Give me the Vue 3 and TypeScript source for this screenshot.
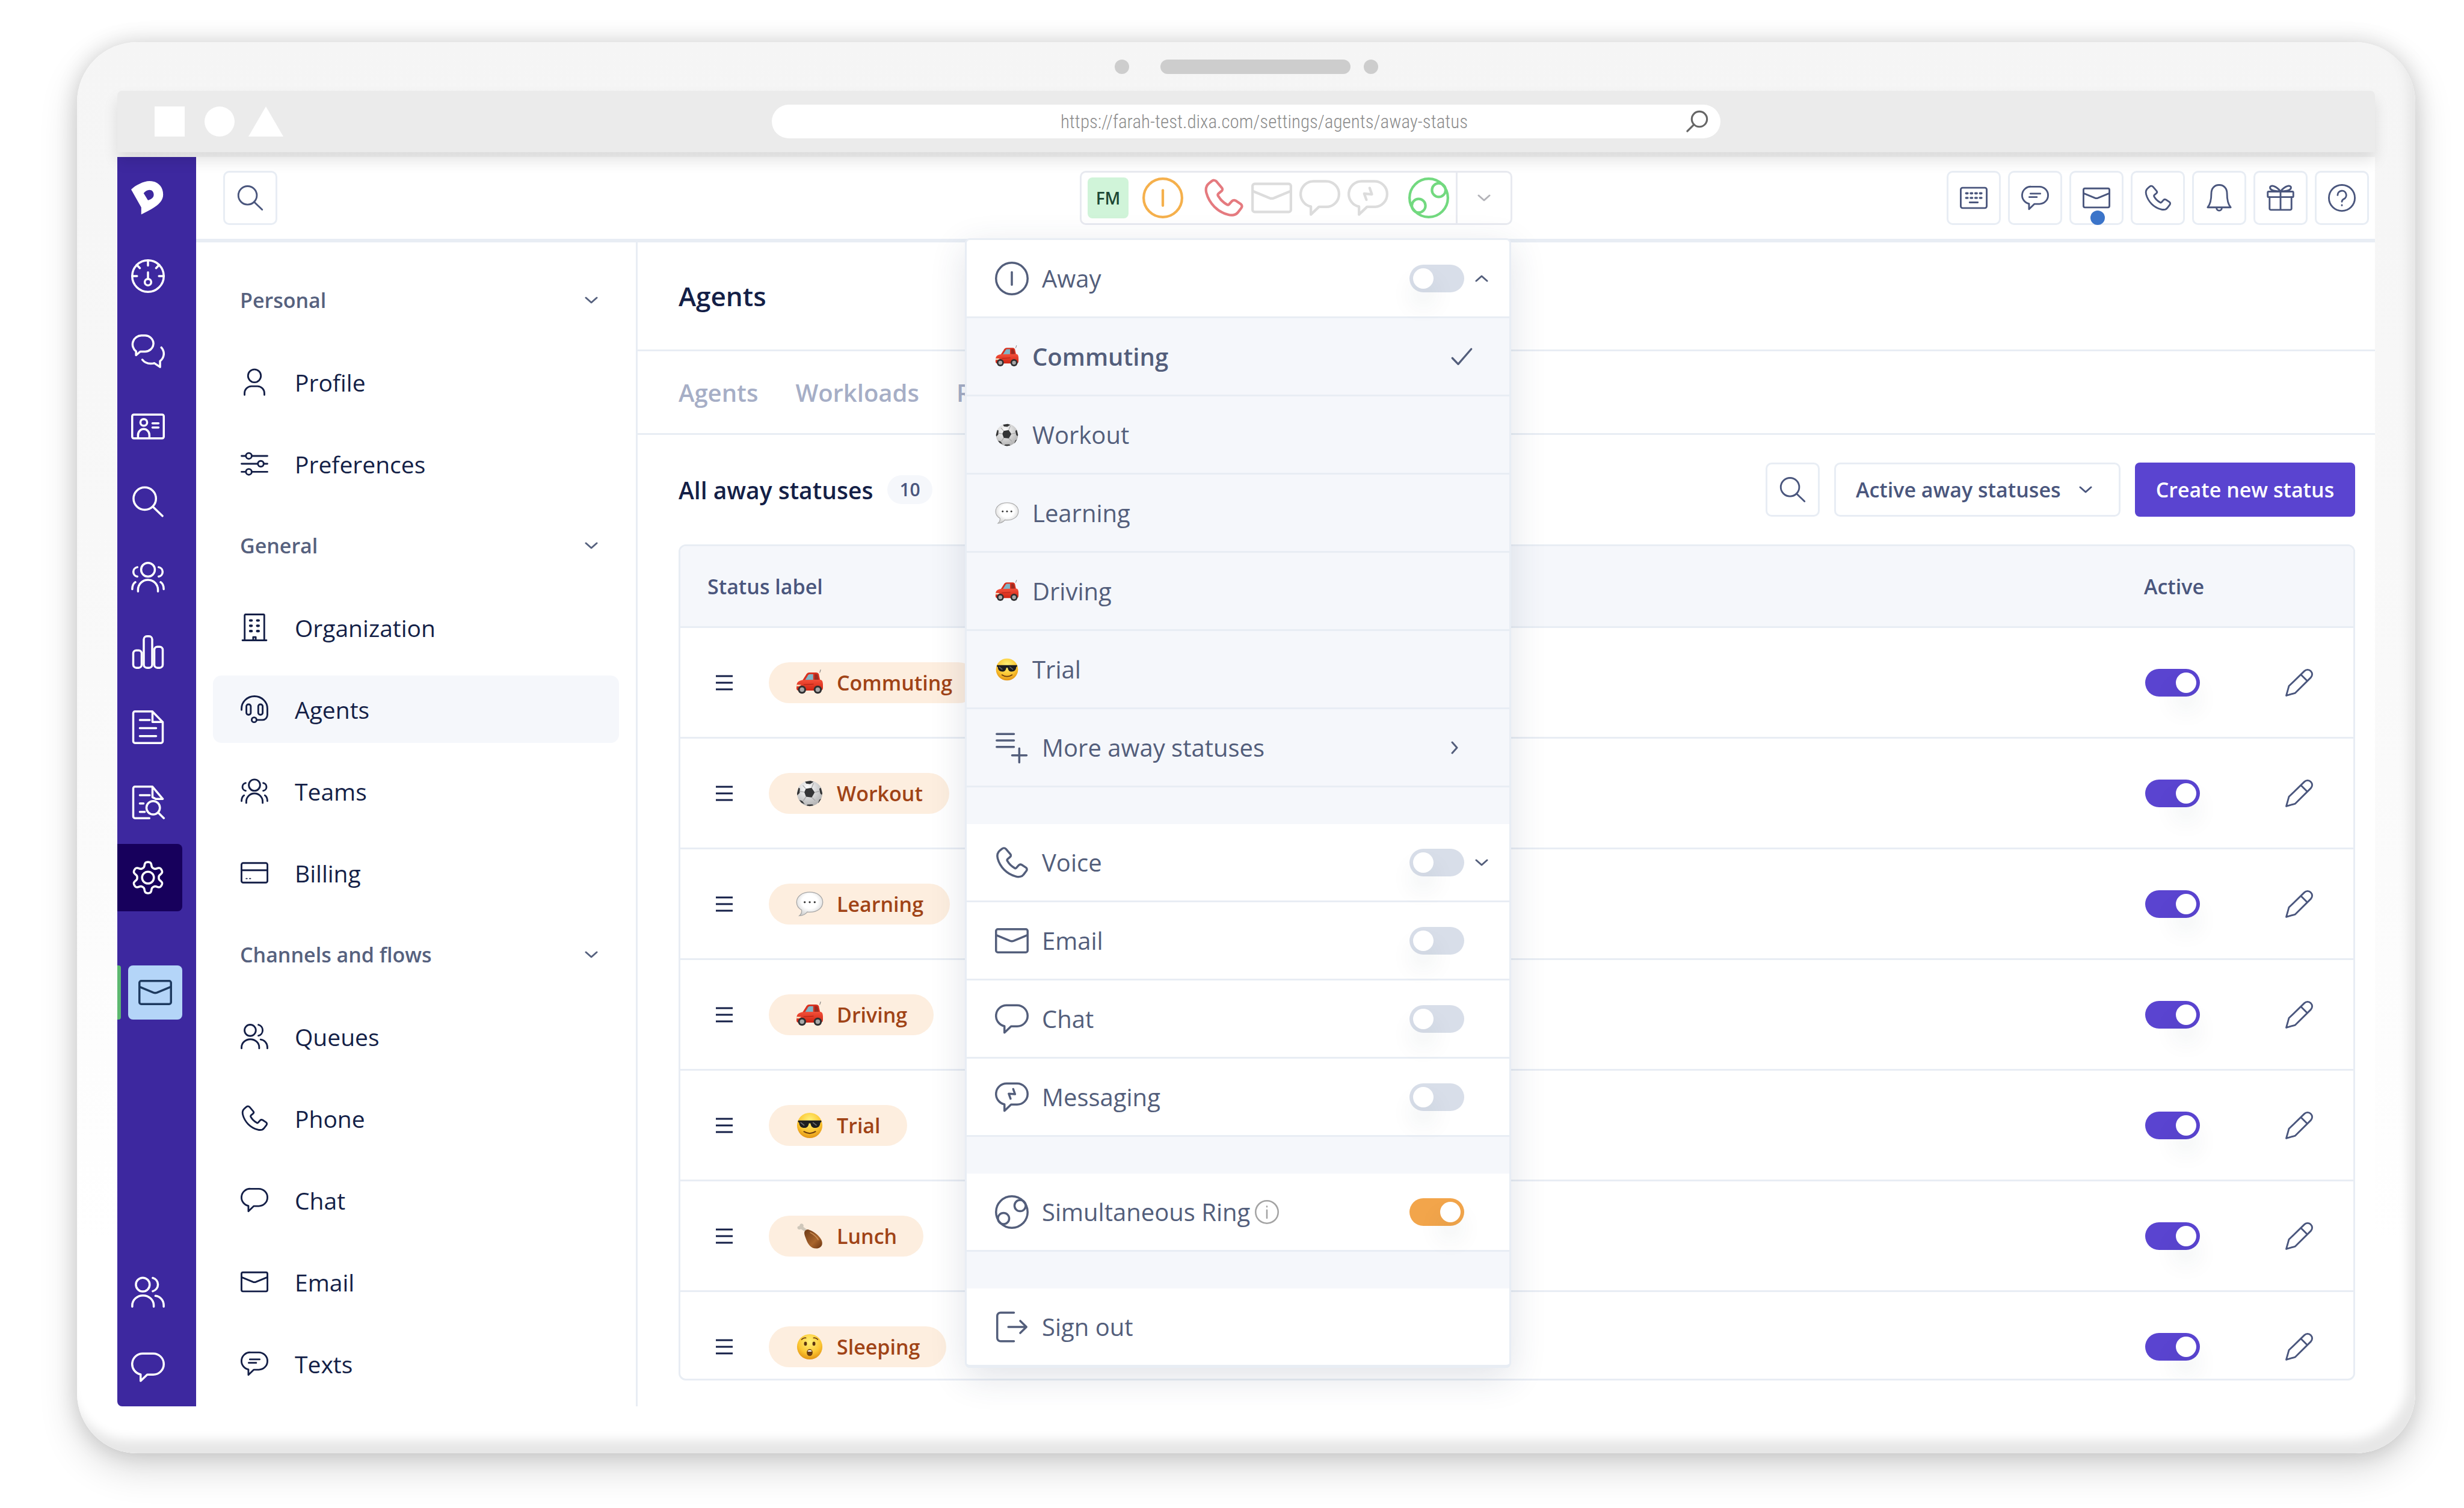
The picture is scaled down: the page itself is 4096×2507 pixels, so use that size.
<script setup lang="ts">
import { ref } from 'vue'

interface NavItem { label: string; icon: string; active?: boolean }
interface NavGroup { title: string; items: NavItem[] }
interface Status { label: string; emoji: string; active: boolean }
interface Channel { label: string; icon: string; on: boolean; expandable?: boolean }

/* Six-lobed outline of the settings cog, sampled around the centre. */
function cogOutline(): string {
  const points: string[] = []
  for (let i = 0; i < 120; i++) {
    const angle = (i / 120) * Math.PI * 2
    const radius = 9.4 + 1.8 * Math.tanh(1.8 * Math.cos(6 * angle))
    points.push(`${(12 + radius * Math.sin(angle)).toFixed(2)} ${(12 - radius * Math.cos(angle)).toFixed(2)}`)
  }
  return `M${points.join('L')}z`
}

const bubble = '<path d="M15.750 2.250h-7.500a7.500 7.500 0 0 0-1.500 14.850v4.650l4.700-4.500h4.300a7.500 7.500 0 0 0 0-15z"/>'

const icons: Record<string, string> = {
  search: '<circle cx="9.700" cy="9.800" r="8"/><path d="M15.400 15.500l6.900 6.700"/>',
  urlSearch: '<circle cx="14.500" cy="9.500" r="8"/><path d="M8.800 15.200l-7 7"/>',
  gauge: '<circle cx="12" cy="12" r="11.250"/><circle cx="12" cy="16.300" r="2.300"/><path d="M12 14V9.300M12 .8v3.700M4 4l2.200 2.300M20 4l-2.200 2.300M.8 12h3.400M23.200 12h-3.400"/>',
  chats: '<path d="M9.500.8H7.300a6.300 6.300 0 0 0-3.800 11.300v2.700l3-2.600h3a6 6 0 0 0 6.400-5.800A6 6 0 0 0 9.500.8z"/><path d="M21.500 9.300c2.700 3.100 2.200 7.300-.9 9.700v4.200l-4-2.700c-3.600.7-6.800-.1-8.600-2.500"/>',
  idCard: '<rect x=".75" y="3.500" width="22.500" height="17" rx="1.200"/><circle cx="9" cy="9.100" r="2.400"/><path d="M4.900 20.300v-2.200a4 4.200 0 0 1 8.100 0v2.200M15.200 9.800h4.300M15.200 12.700h4.300"/>',
  team: '<circle cx="12" cy="6.900" r="4.900"/><path d="M4.900 22.400v-1.200a7.100 7.100 0 0 1 14.200 0v1.200M4.400 5.100a3.400 3.400 0 0 0 0 6.700M19.600 5.100a3.400 3.400 0 0 1 0 6.700M3 15.800C1.500 16.700.8 18.500.8 20.800M21 15.800c1.500.9 2.200 2.700 2.200 5"/>',
  bars: '<rect x="1.500" y="10.800" width="6" height="12.400" rx="2.200"/><rect x="9" y=".8" width="6" height="22.400" rx="2.200"/><rect x="16.500" y="8.200" width="6" height="15" rx="2.200"/>',
  doc: '<path d="M2.700.8h12.500l7.300 7.500v13.700a1.200 1.200 0 0 1-1.200 1.200H2.700a1.200 1.200 0 0 1-1.200-1.200V2A1.200 1.200 0 0 1 2.700.8zM15.200.8v7.500h7.300M6.200 6.900h7M6.200 12.600h11.600M6.200 18.300h11.600"/>',
  docSearch: '<path d="M13 23.200H2.700A1.200 1.200 0 0 1 1.500 22V2A1.200 1.200 0 0 1 2.700.8h12.500l7.300 8.700h-5l-2.300-1.200V.8M6.200 6.900h7M6.200 12.800h2.600M6.200 18.700h3.500M19.300 19.300l4 3.900"/><circle cx="15.700" cy="15.800" r="4.800"/>',
  cog: `<path d="${cogOutline()}"/><circle cx="12" cy="12" r="4.200"/>`,
  mail: '<rect x=".75" y="3.750" width="22.500" height="16.500" rx="1.300"/><path d="M.9 8l9.800 4.100q1.300.5 2.600 0L23.100 8"/>',
  people: '<circle cx="8.300" cy="6.700" r="4.900"/><path d="M.8 22.400v-.9a7.500 6.900 0 0 1 15.300 0v.9M15.400 1.900a4.900 4.900 0 0 1 0 9.500M17.300 14.700a6.400 6.800 0 0 1 5.900 6.800v.9"/>',
  chat: bubble,
  text: `${bubble}<path d="M8 8.300h8.500M7 11.300h6.500"/>`,
  message: `${bubble}<path d="M13 6.200l1.300 3.700-4.500-.4 1.300 3.600"/>`,
  profile: '<circle cx="12" cy="6.700" r="5.600"/><path d="M3.400 23.200v-1.500a6 6 0 0 1 6-6h5.200a6 6 0 0 1 6 6v1.500"/>',
  sliders: '<path d="M.8 5.200h3.700M9.700 5.200h13.500M.8 12h14M20.200 12h3M.8 19h3.700M9.700 19h13.500"/><circle cx="7.100" cy="5.200" r="2.500"/><circle cx="17.500" cy="12" r="2.500"/><circle cx="7.100" cy="19" r="2.500"/>',
  building: '<path d="M3.500 23.200V1.500a.7.700 0 0 1 .7-.7h15.600a.7.700 0 0 1 .7.7v21.700M1.600 23.200h20.800M10.900 23v-2.600h2.200V23"/><path stroke-width="2.200" d="M8.300 6h1.200M14.400 6h1.200M8.300 10.600h1.200M14.400 10.600h1.200M8.300 15.200h1.200M14.400 15.200h1.200"/>',
  headset: '<path d="M.8 12.700v-1.200a11.200 10.700 0 0 1 22.400 0v5.500a4.300 4.300 0 0 1-4.300 4.300H14"/><rect x="5" y="7.800" width="3.800" height="9" rx="1.700"/><rect x="15.300" y="7.800" width="3.800" height="9" rx="1.700"/><circle cx="11.700" cy="21.200" r="2.100"/>',
  card: '<rect x=".75" y="3.500" width="22.500" height="17" rx="1.500"/><path d="M.8 9.800h22.400"/><path stroke-width="1" d="M4.800 17h.8M7.800 17h.8"/>',
  phone: '<path d="M5 2.200a2 2 0 0 1 2.800.1L11 6.100a1.300 1.300 0 0 1-.1 1.800l-2 1.700a1 1 0 0 0-.1 1.200c1.200 2.100 3 3.900 5.200 5.100.4.3.9.2 1.200-.1l1.700-1.900a1.900 1.900 0 0 1 2.200-.3l3 2a1.600 1.600 0 0 1 .3 2.300l-2 2.600c-1.200 1.600-3.600 2-5.800 1.300C8.500 20.200 3.600 15.300 1.900 9 1.300 6.600 2 4.600 3.500 3.400z"/>',
  keyboard: '<rect x=".75" y="3.200" width="22.500" height="17.600" rx="1.600"/><path stroke-width="1.900" d="M5.400 8h1.300M9.400 8h1.300M13.400 8h1.300M17.400 8h1.300M5.400 12h1.300M9.400 12h1.300M13.400 12h1.300M17.400 12h1.300"/><path d="M8.500 15.900h7"/>',
  bell: '<path d="M12 .8c4.200 0 6.800 3 6.800 7.200 0 5.500.7 9.500 3.200 12.200H2c2.500-2.700 3.200-6.700 3.200-12.200C5.200 3.800 7.800.8 12 .8zM9.700 20.600a2.300 2.400 0 0 0 4.600 0"/>',
  gift: '<rect x=".9" y="6.500" width="22.200" height="4.800" rx=".8"/><path d="M2.500 11.300v9.900a1.200 1.200 0 0 0 1.200 1.200h16.600a1.200 1.200 0 0 0 1.200-1.200v-9.900M12 6.500v15.900M12 6.300C9 6.300 4 6.200 3 3.700 2.500 2 4.300 1.200 6 1.800c2.500.8 4.500 2.700 6 4.500 1.500-1.800 3.500-3.700 6-4.500 1.700-.6 3.500.2 3 1.900-1 2.500-6 2.600-9 2.600z"/>',
  help: '<circle cx="12" cy="12" r="11.250"/><path d="M8.300 9.600a3.750 3.750 0 1 1 5.300 3.400c-1 .5-1.600 1.300-1.600 2.300M12 18.200v.3"/>',
  power: '<circle cx="12" cy="12" r="11.250"/><path d="M12 7.500v9"/>',
  ring: '<circle cx="12" cy="12" r="11.250"/><circle cx="17.900" cy="7.400" r="4"/><circle cx="6.100" cy="16.600" r="4"/>',
  info: '<circle cx="12" cy="12" r="11.250"/><path d="M12 10v8M12 6.300v.5"/>',
  listPlus: '<path d="M1.200 2.300h12.300M1.200 6.900h12.300M1.200 11.500h12.300M17.300 12.500v10M12.200 17.500h10.300"/>',
  signOut: '<path d="M13.500 1.800H4A2.400 2.400 0 0 0 1.600 4.200v15.600A2.400 2.400 0 0 0 4 22.200h9.500M9.500 12h12.700M18 7.700l4.400 4.300-4.400 4.300"/>',
  pencil: '<path d="M.8 23.200l2.300-8.300L16.500 1.900a3.900 3.900 0 0 1 5.600 5.600L8.600 20.900zM13.500 4.900l5.500 5.500"/>',
  check: '<path d="M1.500 13.500l6.500 6.700L22.500 3.500"/>',
}

const emojis: Record<string, string> = {
  car: '<path d="M8.500 15L14 6.500q1.300-1.800 3.500-1.800h9q2.500 0 3.300 2l1.700 7.800z" fill="#d9301e"/><path d="M12 14.500L16 8q.8-1.200 2.200-1.200h4.300v7.700z" fill="#7fb4c6"/><path d="M24.300 6.800h2.400q1.200 0 1.600 1.200l1.600 6.500h-5.600z" fill="#9b2c22"/><path d="M31 5l1.300-4" stroke="#777" stroke-width=".8"/><path d="M1 22c0-4.800 3-7 8.500-7.500L32 14q3 .5 3.200 5.500v5q0 3.500-3 3.700H3.500Q.8 28 .8 25z" fill="url(#carPaint)"/><path d="M1 20.500l6 .3q-1 1.900-3.200 1.900H1z" fill="#f7e7c8"/><path d="M10 20.500l13-.8" stroke="#a91f13" stroke-width=".8"/><circle cx="8" cy="27" r="5.300" fill="#2f2f31"/><circle cx="8" cy="27" r="2.900" fill="#a8a8a8"/><circle cx="28.500" cy="27" r="5.300" fill="#2f2f31"/><circle cx="28.500" cy="27" r="2.900" fill="#a8a8a8"/>',
  ball: '<circle cx="18" cy="18" r="16.500" fill="url(#ballShade)"/><path d="M13 12l7.500-1.300 4 6-3.800 6.500-7.500-.8-2.200-6z" fill="#343536"/><path d="M12 2.800l7-1.300 4 1.500-4.500 2.800-5-.5zM1.500 18l2-7.500 1.800 1-.4 6-3 3zM34.500 18l-2-7.500-2 1.500 1.200 6 2 2zM7 30l-2.500-3.500 4 1.500 3 4zM29 30.300l1.500-4 2.500-1.500-3.500 5.500zM15 32.500l6.500-.3 1.500 1.500-5 1-4-.8z" fill="#343536"/><path d="M13 12L9 7.500M20.500 10.700l2.500-6M24.500 16.700l6-1.500M20.700 23.200l4.500 4.300M13.200 22.400L9.500 27.800M11 16.400l-6-1" stroke="#a5a5a5" fill="none"/>',
  speech: '<path d="M18 2.500C8 2.500 1 8 1 15.500c0 4.500 2.500 8 6.500 10.300.3 3-.7 5.500-3 7.400 4.500-.2 8-2 10.300-5 1 .2 2.100.3 3.200.3 10 0 17-5.500 17-13s-7-13-17-13z" fill="url(#bubbleShade)" stroke="#a6a6a6" stroke-width="1"/><circle cx="11.500" cy="15.500" r="1.300" fill="#333"/><circle cx="18" cy="15.500" r="1.300" fill="#333"/><circle cx="24.500" cy="15.500" r="1.300" fill="#333"/>',
  cool: '<circle cx="18" cy="18" r="16.500" fill="url(#face)"/><path d="M3 11.500h30l.3 1.800-1.500 1.200c-.5 5-3 6.700-6.600 6.700-3.700 0-5.500-2-6.200-6h-2c-.7 4-2.500 6-6.200 6-3.600 0-6.100-1.700-6.600-6.700l-1.500-1.200z" fill="#1d1d1f"/><path d="M6 14l5 4M22 14l5 4" stroke="#6e6e70" stroke-width="1.300"/><path d="M10.500 26q7.500 4.800 15 0" fill="none" stroke="#6b3c10" stroke-width="1.600" stroke-linecap="round"/>',
  drumstick: '<path d="M12.500 12.500L6.500 8.800C4 10.500 1.500 8.700 2 6.500c.3-1.400 1.700-1.900 2.800-1.600C4.600 2.700 6.300 1.200 8 1.800c2 .6 2.500 2.600 1.700 4.200l5.500 4z" fill="#cfc7ba"/><path d="M11 13.500c.3-2.500 2.700-4.500 5.500-4 5.500 1.500 13 6.500 16.500 13 2.800 5.500 1 10.500-5 11.500-7.500 1-12-4.500-14.500-11.500-1.300-3.500-2.700-6.500-2.500-9z" fill="url(#roast)"/><path d="M19 13.500c4 2 7.500 5 10 9" stroke="#c98a50" stroke-width="1.500" fill="none" stroke-linecap="round"/>',
  surprised: '<circle cx="18" cy="18" r="16.500" fill="url(#face)"/><ellipse cx="12.500" cy="14" rx="1.900" ry="2.600" fill="#5b3310"/><ellipse cx="23.500" cy="14" rx="1.900" ry="2.600" fill="#5b3310"/><path d="M7.500 8.500q2.500-2.500 5.500-2M28.500 8.500q-2.500-2.500-5.500-2" fill="none" stroke="#6b3c10" stroke-width="1.300" stroke-linecap="round"/><ellipse cx="18" cy="25.500" rx="3.800" ry="4.500" fill="#6b3c10"/><path d="M15.500 23q2.500-1.300 5 0v1.200h-5z" fill="#fff"/>',
}

const railIcons = ['gauge', 'chats', 'idCard', 'search', 'team', 'bars', 'doc', 'docSearch', 'cog']
const toolIcons = ['keyboard', 'text', 'mail', 'phone', 'bell', 'gift', 'help']

const groups: NavGroup[] = [
  { title: 'Personal', items: [{ label: 'Profile', icon: 'profile' }, { label: 'Preferences', icon: 'sliders' }] },
  {
    title: 'General',
    items: [
      { label: 'Organization', icon: 'building' },
      { label: 'Agents', icon: 'headset', active: true },
      { label: 'Teams', icon: 'team' },
      { label: 'Billing', icon: 'card' },
    ],
  },
  {
    title: 'Channels and flows',
    items: [
      { label: 'Queues', icon: 'people' },
      { label: 'Phone', icon: 'phone' },
      { label: 'Chat', icon: 'chat' },
      { label: 'Email', icon: 'mail' },
      { label: 'Texts', icon: 'text' },
    ],
  },
]

const statuses = ref<Status[]>([
  { label: 'Commuting', emoji: 'car', active: true },
  { label: 'Workout', emoji: 'ball', active: true },
  { label: 'Learning', emoji: 'speech', active: true },
  { label: 'Driving', emoji: 'car', active: true },
  { label: 'Trial', emoji: 'cool', active: true },
  { label: 'Lunch', emoji: 'drumstick', active: true },
  { label: 'Sleeping', emoji: 'surprised', active: true },
])

const away = ref(false)
const simultaneous = ref(true)
const selected = ref('Commuting')
const channels = ref<Channel[]>([
  { label: 'Voice', icon: 'phone', on: false, expandable: true },
  { label: 'Email', icon: 'mail', on: false },
  { label: 'Chat', icon: 'chat', on: false },
  { label: 'Messaging', icon: 'message', on: false },
])
</script>

<template>
  <div class="page">
    <svg class="defs" aria-hidden="true">
      <defs>
        <linearGradient id="carPaint" x1="0" y1="0" x2="0" y2="1"><stop offset="0" stop-color="#f4503a" /><stop offset="1" stop-color="#cf2413" /></linearGradient>
        <radialGradient id="ballShade" cx=".4" cy=".3" r=".8"><stop offset="0" stop-color="#fff" /><stop offset="1" stop-color="#a9a9a9" /></radialGradient>
        <radialGradient id="bubbleShade" cx=".5" cy=".4" r=".6"><stop offset=".5" stop-color="#fff" /><stop offset="1" stop-color="#d2d2d2" /></radialGradient>
        <radialGradient id="face" cx=".5" cy=".3" r=".75"><stop offset="0" stop-color="#fff27a" /><stop offset=".6" stop-color="#fbc531" /><stop offset="1" stop-color="#dd8a10" /></radialGradient>
        <linearGradient id="roast" x1="0" y1="0" x2="1" y2="1"><stop offset="0" stop-color="#6e3a17" /><stop offset=".6" stop-color="#a9652c" /><stop offset="1" stop-color="#6a3310" /></linearGradient>
      </defs>
    </svg>

    <div class="device">
      <div class="camera"><i class="lens"></i><i class="speaker"></i><i class="lens near"></i></div>

      <div class="browser">
        <svg class="shapes" viewBox="0 0 214 50" aria-hidden="true">
          <rect width="50" height="50" /><circle cx="108" cy="25" r="25" /><path d="M185 0l29 50h-58z" />
        </svg>
        <label class="address">
          <input type="text" aria-label="Address" value="https://farah-test.dixa.com/settings/agents/away-status" />
          <svg class="icon" viewBox="0 0 24 24" v-html="icons.urlSearch"></svg>
        </label>
      </div>

      <div class="screen">
        <nav class="rail" aria-label="Main">
          <a class="rail-item logo" href="#" aria-label="Home">
            <svg viewBox="0 0 24 24"><path fill="#fff" fill-rule="evenodd" d="M0 6C3 3 9 0 13 0c6 0 9.800 4 9.800 9.600C22.800 17 13 20.500 7.200 23.800v-5zM8.900 8.700l3.100 5c2.500-.8 4.100-2 4.100-4 0-1.900-1.100-3.400-3.100-3.400-1.500 0-3 .9-4.100 2.400z" /></svg>
          </a>
          <a v-for="name in railIcons" :key="name" class="rail-item" :class="{ current: name === 'cog' }" href="#" :aria-label="name">
            <svg class="icon" viewBox="0 0 24 24" v-html="icons[name]"></svg>
          </a>
          <div class="conversation">
            <i class="presence"></i>
            <a href="#" aria-label="Open email"><svg class="icon" viewBox="0 0 24 24" v-html="icons.mail"></svg></a>
          </div>
          <span class="spacer"></span>
          <a class="rail-item" href="#" aria-label="Contacts"><svg class="icon" viewBox="0 0 24 24" v-html="icons.people"></svg></a>
          <a class="rail-item" href="#" aria-label="Support chat"><svg class="icon" viewBox="0 0 24 24" v-html="icons.chat"></svg></a>
        </nav>

        <div class="app">
          <header class="topbar">
            <button class="square" aria-label="Search"><svg class="icon" viewBox="0 0 24 24" v-html="icons.search"></svg></button>

            <div class="presence-box">
              <span class="avatar">FM</span>
              <svg class="icon amber" viewBox="0 0 24 24" v-html="icons.power"></svg>
              <div class="channel-icons">
                <svg class="icon red" viewBox="0 0 24 24" v-html="icons.phone"></svg>
                <svg class="icon" viewBox="0 0 24 24" v-html="icons.mail"></svg>
                <svg class="icon" viewBox="0 0 24 24" v-html="icons.chat"></svg>
                <svg class="icon" viewBox="0 0 24 24" v-html="icons.message"></svg>
              </div>
              <svg class="icon green" viewBox="0 0 24 24" v-html="icons.ring"></svg>
              <button class="expand" aria-label="Toggle status menu"><svg class="chevron" viewBox="0 0 22 12"><path d="M2 2l9 8 9-8" /></svg></button>

              <div class="menu">
                <div class="row">
                  <svg class="icon" viewBox="0 0 24 24" v-html="icons.power"></svg>
                  <label class="name" for="away">Away</label>
                  <input id="away" v-model="away" class="toggle" type="checkbox" />
                  <button class="fold" aria-label="Collapse away statuses"><svg class="chevron" viewBox="0 0 22 12"><path d="M2 10l9-8 9 8" /></svg></button>
                </div>
                <button v-for="s in statuses.slice(0, 5)" :key="s.label" class="row shaded" :class="{ chosen: s.label === selected }" @click="selected = s.label">
                  <svg class="emoji" viewBox="0 0 36 36" v-html="emojis[s.emoji]"></svg>
                  <span class="name">{{ s.label }}</span>
                  <svg v-if="s.label === selected" class="icon tick" viewBox="0 0 24 24" v-html="icons.check"></svg>
                </button>
                <button class="row shaded">
                  <svg class="icon" viewBox="0 0 24 24" v-html="icons.listPlus"></svg>
                  <span class="name">More away statuses</span>
                  <svg class="chevron side" viewBox="0 0 12 22"><path d="M2 2l8 9-8 9" /></svg>
                </button>
                <div class="divider"></div>
                <div v-for="c in channels" :key="c.label" class="row">
                  <svg class="icon" viewBox="0 0 24 24" v-html="icons[c.icon]"></svg>
                  <label class="name" :for="'channel-' + c.label">{{ c.label }}</label>
                  <input :id="'channel-' + c.label" v-model="c.on" class="toggle" type="checkbox" />
                  <button v-if="c.expandable" class="fold" aria-label="Expand voice options"><svg class="chevron" viewBox="0 0 22 12"><path d="M2 2l9 8 9-8" /></svg></button>
                  <span v-else class="fold"></span>
                </div>
                <div class="divider"></div>
                <div class="row">
                  <svg class="icon" viewBox="0 0 24 24" v-html="icons.ring"></svg>
                  <div class="name with-info">
                    <label for="ring">Simultaneous Ring</label>
                    <svg class="icon info" viewBox="0 0 24 24" v-html="icons.info"></svg>
                  </div>
                  <input id="ring" v-model="simultaneous" class="toggle orange" type="checkbox" />
                  <span class="fold"></span>
                </div>
                <div class="divider"></div>
                <button class="row last">
                  <svg class="icon" viewBox="0 0 24 24" v-html="icons.signOut"></svg>
                  <span class="name">Sign out</span>
                </button>
              </div>
            </div>

            <div class="tools">
              <button v-for="name in toolIcons" :key="name" class="square" :aria-label="name">
                <svg class="icon" viewBox="0 0 24 24" v-html="icons[name]"></svg>
                <i v-if="name === 'mail'" class="dot"></i>
              </button>
            </div>
          </header>

          <div class="body">
            <nav class="settings" aria-label="Settings">
              <template v-for="g in groups" :key="g.title">
                <button class="group">{{ g.title }}<svg class="chevron" viewBox="0 0 22 12"><path d="M2 2l9 8 9-8" /></svg></button>
                <a v-for="item in g.items" :key="item.label" class="item" :class="{ active: item.active }" href="#">
                  <svg class="icon" viewBox="0 0 24 24" v-html="icons[item.icon]"></svg>{{ item.label }}
                </a>
              </template>
            </nav>

            <main class="content">
              <h1>Agents</h1>
              <nav class="tabs" aria-label="Agent settings"><a href="#">Agents</a><a href="#">Workloads</a><a href="#">R</a></nav>
              <div class="toolbar">
                <h2>All away statuses</h2>
                <span class="count">10</span>
                <span class="spacer"></span>
                <button class="square" aria-label="Search statuses"><svg class="icon" viewBox="0 0 24 24" v-html="icons.search"></svg></button>
                <div class="filter">
                  <select aria-label="Status filter"><option>Active away statuses</option></select>
                  <svg class="chevron" viewBox="0 0 22 12"><path d="M2 2l9 8 9-8" /></svg>
                </div>
                <button class="create">Create new status</button>
              </div>
              <div class="table-box">
                <table>
                  <thead>
                    <tr><th scope="col">Status label</th><th scope="col" class="col-active">Active</th><td class="col-edit"></td></tr>
                  </thead>
                  <tbody>
                    <tr v-for="s in statuses" :key="s.label">
                      <td>
                        <div class="label-cell">
                          <svg class="handle" viewBox="0 0 28 28"><path d="M0 3h28M0 14h28M0 25h28" /></svg>
                          <span class="pill"><svg class="emoji" viewBox="0 0 36 36" v-html="emojis[s.emoji]"></svg>{{ s.label }}</span>
                        </div>
                      </td>
                      <td><input v-model="s.active" class="toggle violet" type="checkbox" :aria-label="s.label + ' active'" /></td>
                      <td><button class="edit" :aria-label="'Edit ' + s.label"><svg class="icon" viewBox="0 0 24 24" v-html="icons.pencil"></svg></button></td>
                    </tr>
                  </tbody>
                </table>
              </div>
            </main>
          </div>
        </div>
      </div>
    </div>
  </div>
</template>

<style>
body {
  margin: 0;
  background: #fff;
}
</style>

<style scoped>
* {
  box-sizing: border-box;
}
.page {
  display: flex;
  height: 100vh;
  padding: 70px 81px 91px 128px;
  overflow: hidden;
  font-family: 'Open Sans', 'Noto Sans', sans-serif;
  font-size: 34px;
  color: #141f47;
}
.defs {
  position: absolute;
  width: 0;
  height: 0;
}
button {
  padding: 0;
  border: 0;
  background: none;
  font: inherit;
  color: inherit;
  text-align: left;
}
a {
  color: inherit;
  text-decoration: none;
}
svg {
  display: block;
  flex: none;
}
.icon {
  width: 46px;
  height: 46px;
  fill: none;
  stroke: currentColor;
  stroke-width: 1.5;
  stroke-linecap: round;
  stroke-linejoin: round;
  overflow: visible;
}
.chevron {
  width: 22px;
  height: 12px;
  fill: none;
  stroke: currentColor;
  stroke-width: 3;
  stroke-linecap: round;
  stroke-linejoin: round;
}
.spacer {
  flex: 1;
}

/* Tablet frame */
.device {
  flex: 1;
  min-width: 0;
  display: flex;
  flex-direction: column;
  padding: 29px 67px 78px;
  border-radius: 100px;
  background: linear-gradient(#f5f5f5, #f9f9f9 45%, #fff 85%);
  box-shadow:
    0 24px 64px rgba(0, 0, 0, 0.16),
    0 0 36px rgba(0, 0, 0, 0.14),
    inset -12px -22px 18px #e7e7e7;
}
.camera {
  display: flex;
  justify-content: center;
  height: 52px;
}
.lens,
.speaker {
  width: 24px;
  height: 24px;
  border-radius: 12px;
  background: #cdcdcd;
}
.speaker {
  width: 316px;
  margin-left: 52px;
}
.near {
  margin-left: 22px;
}
.browser {
  position: relative;
  z-index: 2;
  display: grid;
  grid-template-columns: 1fr 42% 1fr;
  align-items: center;
  height: 102px;
  margin-bottom: 8px;
  border-radius: 8px 8px 0 0;
  background: #ebebeb;
  box-shadow: 0 14px 24px rgba(0, 0, 0, 0.11);
}
.shapes {
  width: 214px;
  height: 50px;
  margin-left: 62px;
  fill: #fff;
}
.address {
  display: flex;
  align-items: center;
  height: 56px;
  padding-right: 20px;
  border-radius: 28px;
  background: #fff;
  color: #666;
}
.address input {
  flex: 1;
  min-width: 0;
  padding: 0 0 0 118px;
  border: 0;
  outline: 0;
  background: none;
  font: 300 31px 'Liberation Sans Narrow', 'Roboto Condensed', Roboto, sans-serif;
  text-align: center;
  color: #8c8c8c;
}
.address .icon {
  width: 38px;
  height: 38px;
  stroke-width: 2;
}

/* Purple rail */
.screen {
  flex: 1;
  min-height: 0;
  display: flex;
  border-bottom-left-radius: 8px;
}
.rail {
  display: flex;
  flex-direction: column;
  gap: 13px;
  width: 131px;
  flex: none;
  padding: 12px 0 9px;
  border-bottom-left-radius: 8px;
  background: #3d289f;
  color: #fff;
}
.rail-item {
  display: flex;
  align-items: center;
  width: 108px;
  height: 112px;
  padding-left: 23px;
  border-radius: 0 8px 8px 0;
}
.rail svg {
  width: 56px;
  height: 56px;
}
.logo {
  margin-bottom: 5px;
}
.current {
  background: #17005c;
}
.conversation {
  display: flex;
  justify-content: space-between;
  width: 108px;
  height: 90px;
  margin-top: 77px;
}
.presence {
  width: 6px;
  border-radius: 0 4px 4px 0;
  background: #5cb870;
}
.conversation a {
  display: flex;
  align-items: center;
  justify-content: center;
  width: 90px;
  border-radius: 8px;
  background: #b4d5f8;
  color: #1d3a5f;
}

/* Top bar */
.app {
  flex: 1;
  min-width: 0;
  display: flex;
  flex-direction: column;
  background: #fff;
}
.topbar {
  display: grid;
  grid-template-columns: 1fr auto 1fr;
  align-items: center;
  height: 142px;
  padding: 0 10px 0 45px;
  border-bottom: 6px solid #e8edf4;
}
.square {
  display: flex;
  align-items: center;
  justify-content: center;
  position: relative;
  flex: none;
  width: 90px;
  height: 90px;
  border: 3px solid #e8edf4;
  border-radius: 10px;
  background: #fff;
  color: #4a567d;
}
.tools {
  display: flex;
  justify-content: flex-end;
  gap: 12px;
}
.dot {
  position: absolute;
  bottom: -3px;
  left: 32px;
  width: 24px;
  height: 24px;
  border-radius: 50%;
  background: #3b74c9;
}
.presence-box {
  position: relative;
  display: flex;
  align-items: center;
  height: 90px;
  padding-left: 10px;
  border: 3px solid #e8eaf0;
  border-radius: 10px;
}
.presence-box > .icon,
.channel-icons .icon {
  width: 68px;
  height: 68px;
}
.avatar {
  width: 68px;
  margin-right: 23px;
  border-radius: 8px;
  background: #d0f4d9;
  font-size: 28px;
  font-weight: 600;
  line-height: 68px;
  text-align: center;
  color: #1c4734;
}
.channel-icons {
  display: flex;
  gap: 12px;
  margin: 0 33px;
  color: #dcdcdc;
}
.amber {
  color: #f5b04c;
}
.channel-icons .red {
  color: #e57a7f;
}
.green {
  color: #72d97f;
}
.expand {
  display: flex;
  align-items: center;
  justify-content: center;
  width: 91px;
  height: 84px;
  margin-left: 11px;
  border-left: 3px solid #e8eaf0;
  color: #b3b3b8;
}

/* Status menu */
.menu {
  position: absolute;
  z-index: 3;
  top: 109px;
  right: -1px;
  width: 908px;
  border: 3px solid #e8edf4;
  border-bottom-width: 5px;
  border-radius: 8px;
  background: #fff;
  box-shadow: 0 16px 60px rgba(40, 60, 90, 0.14);
  font-size: 40px;
  color: #535e7b;
}
.row {
  display: flex;
  align-items: center;
  gap: 22px;
  width: 100%;
  height: 130px;
  padding: 0 35px 0 47px;
  border-bottom: 3px solid #e8edf4;
}
.row.last {
  height: 127px;
  border-bottom: 0;
}
.row > .icon {
  width: 56px;
  height: 56px;
}
.shaded,
.divider {
  background: #f5f7fb;
}
.divider {
  height: 61px;
}
.row .emoji {
  width: 40px;
  height: 40px;
}
.name {
  flex: 1;
}
.with-info {
  display: flex;
  align-items: center;
  gap: 8px;
}
.info {
  width: 40px;
  height: 40px;
  color: #a3a3a3;
}
.chosen {
  font-weight: 600;
}
.row > .tick {
  width: 36px;
  height: 36px;
  margin-right: 26px;
  stroke-width: 2.2;
}
.side {
  width: 12px;
  height: 22px;
  margin-right: 50px;
}
.fold {
  width: 22px;
  margin-left: -4px;
}
.toggle {
  appearance: none;
  display: block;
  flex: none;
  width: 91px;
  height: 46px;
  margin: 0;
  padding: 6px;
  border-radius: 23px;
  background: #d8dee9;
}
.toggle::before {
  content: '';
  display: block;
  width: 34px;
  height: 34px;
  border-radius: 50%;
  background: #fff;
  box-shadow: 0 26px 40px rgba(20, 60, 70, 0.1);
}
.toggle:checked::before {
  margin-left: auto;
}
.orange:checked {
  background: #f2a54b;
}
.violet:checked {
  background: #5a44d0;
}

/* Settings navigation */
.body {
  flex: 1;
  min-height: 0;
  display: flex;
}
.settings {
  flex: none;
  width: 734px;
  padding: 28px;
  border-right: 3px solid #e8edf4;
}
.group,
.item {
  display: flex;
  align-items: center;
  width: 100%;
  height: 112px;
  margin: 12px 0 24px;
  border-radius: 14px;
}
.group {
  justify-content: space-between;
  padding: 0 35px 0 45px;
  font-weight: 600;
  color: #56617e;
}
.item {
  gap: 44px;
  padding-left: 46px;
  font-size: 39px;
}
.active {
  background: #f5f7fb;
}

/* Main column */
.content {
  flex: 1;
  min-width: 0;
  display: flex;
  flex-direction: column;
}
h1,
.tabs {
  display: flex;
  align-items: center;
  flex: none;
  margin: 0;
  padding-left: 68px;
  border-bottom: 3px solid #e8edf4;
  font-weight: 600;
}
h1 {
  height: 181px;
  font-size: 44px;
}
.tabs {
  gap: 62px;
  height: 139px;
  font-size: 40px;
  color: #a6aec6;
}
.toolbar {
  display: flex;
  align-items: center;
  flex: none;
  gap: 24px;
  padding: 46px 33px 46px 68px;
}
h2 {
  margin: 0;
  font-size: 39px;
  font-weight: 600;
}
.count {
  padding: 0 20px;
  border-radius: 24px;
  background: #f5f7fb;
  font-size: 30px;
  font-weight: 600;
  line-height: 48px;
  color: #4a567d;
}
.filter {
  position: relative;
  color: #4a567d;
}
.filter select {
  appearance: none;
  width: 476px;
  height: 90px;
  padding: 0 80px 0 33px;
  border: 3px solid #e8edf4;
  border-radius: 10px;
  background: #fff;
  font: inherit;
  font-weight: 600;
  color: inherit;
}
.filter .chevron {
  position: absolute;
  top: 39px;
  right: 47px;
}
.create {
  width: 366px;
  height: 90px;
  border-radius: 8px;
  background: #5a44d0;
  font-weight: 600;
  text-align: center;
  color: #fff;
}
.table-box {
  flex: 1;
  min-height: 0;
  margin: 0 33px 43px 68px;
  overflow: hidden;
  border: 3px solid #e8edf4;
  border-radius: 12px;
}
table {
  width: 100%;
  border-collapse: separate;
  border-spacing: 0;
  table-layout: fixed;
}
thead th,
thead td {
  height: 136px;
  padding: 0;
  border-bottom: 3px solid #e8edf4;
  background: #f5f7fb;
  font-weight: 600;
  text-align: left;
  color: #4a567d;
}
thead th:first-child {
  padding-left: 45px;
}
.col-active {
  width: 235px;
}
.col-edit {
  width: 113px;
}
tbody td {
  height: 184px;
  padding: 0;
  border-bottom: 3px solid #e8edf4;
}
.label-cell {
  display: flex;
  align-items: center;
  gap: 60px;
  padding-left: 59px;
}
.handle {
  width: 28px;
  height: 28px;
  fill: none;
  stroke: #141f47;
  stroke-width: 3;
}
.pill {
  display: flex;
  align-items: center;
  gap: 22px;
  height: 68px;
  padding: 0 44px 0 45px;
  border-radius: 34px;
  background: #fdeedf;
  font-weight: 600;
  color: #a04316;
}
.pill .emoji {
  width: 46px;
  height: 46px;
}
.violet {
  margin-left: 2px;
}
.edit {
  display: block;
  color: #4a567d;
}
</style>
